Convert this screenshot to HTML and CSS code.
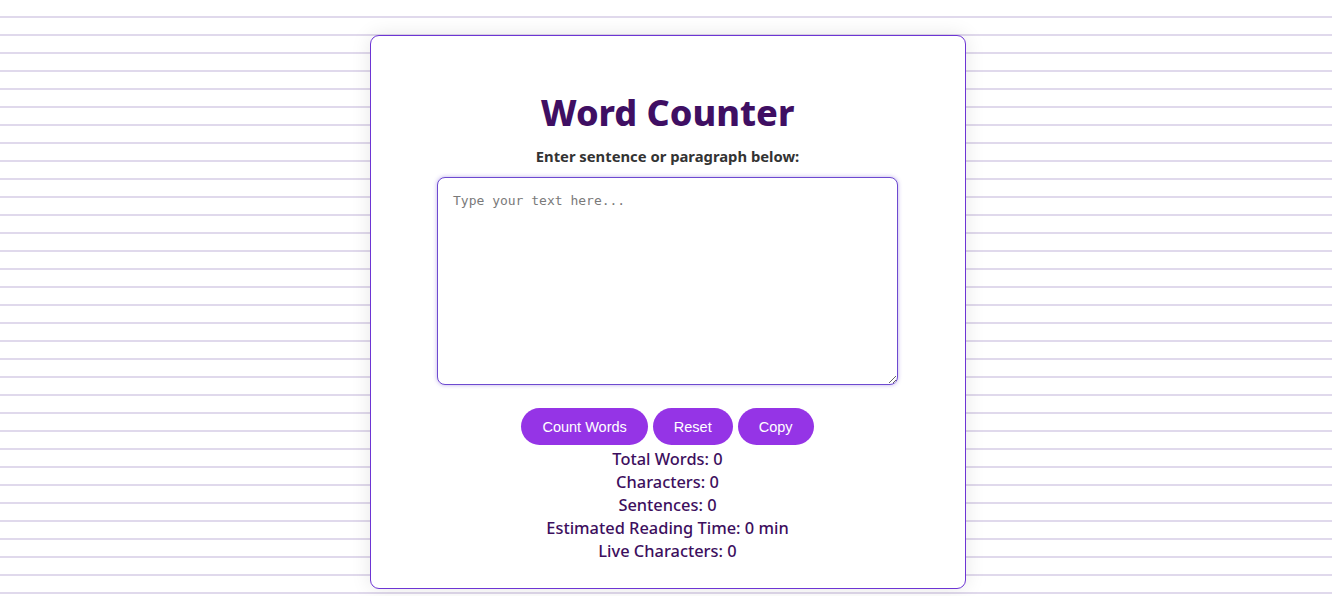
FILE: index.html
```html
<!DOCTYPE html>
<html>
<head>
<meta charset="utf-8">
<link rel="stylesheet" href="styles.css">
</head>
<body>
<main class="card">
  <h1 class="title">Word Counter</h1>
  <p class="label">Enter sentence or paragraph below:</p>
  <textarea class="input" placeholder="Type your text here..."></textarea>
  <div class="actions">
    <button class="btn">Count Words</button>
    <button class="btn">Reset</button>
    <button class="btn">Copy</button>
  </div>
  <div class="stats">
    <div>Total Words: 0</div>
    <div>Characters: 0</div>
    <div>Sentences: 0</div>
    <div>Estimated Reading Time: 0 min</div>
    <div>Live Characters: 0</div>
  </div>
</main>
</body>
</html>
```
FILE: styles.css
```css
html, body {
  margin: 0;
  height: 100%;
}
body {
  background: repeating-linear-gradient(to bottom, #ffffff 0 16px, #e0d9ec 16px 18px);
  font-family: "Noto Sans", "Open Sans", sans-serif;
  padding: 35px 0 0 3px;
  box-sizing: border-box;
}
.card {
  width: 596px;
  box-sizing: border-box;
  margin: 0 auto;
  background: #ffffff;
  border: 1px solid #6d35d4;
  border-radius: 9px;
  box-shadow: 0 0 20px rgba(0, 0, 0, 0.1);
  padding: 52px 20px 25px;
  display: flex;
  flex-direction: column;
  align-items: center;
  height: 554px;
}
.title {
  margin: 0;
  font-size: 36px;
  line-height: 50px;
  font-weight: 800;
  color: #3f0f63;
}
.label {
  margin: 6px 0 0;
  font-size: 14.8px;
  line-height: 24px;
  font-weight: 700;
  color: #333333;
}
.input {
  margin-top: 9px;
  width: 461px;
  height: 208px;
  box-sizing: border-box;
  border: 1px solid #6d4ad0;
  border-radius: 8px;
  box-shadow: 0 0 4px rgba(109, 74, 208, 0.45);
  padding: 15px 15px;
  font-family: "DejaVu Sans Mono", "Liberation Mono", monospace;
  font-size: 13px;
  resize: vertical;
  outline: none;
}
.input::placeholder {
  color: #7a7a7a;
}
.actions {
  margin-top: 23px;
  display: flex;
  gap: 5px;
}
.btn {
  background: #9534e6;
  color: #ffffff;
  border: none;
  border-radius: 20px;
  padding: 0 21px;
  height: 37px;
  font-family: "Liberation Sans", Arial, sans-serif;
  font-size: 14.5px;
  cursor: pointer;
}
.stats {
  margin-top: 2px;
  display: flex;
  flex-direction: column;
  align-items: center;
  font-size: 16.4px;
  line-height: 23px;
  font-weight: 500;
  color: #3d0f5e;
}
```
